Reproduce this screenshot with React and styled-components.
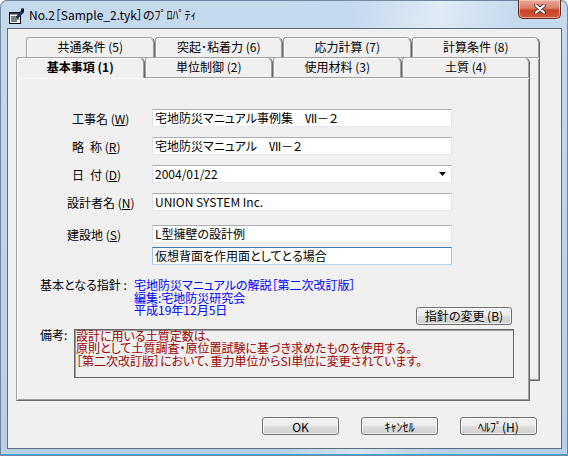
import React from 'react';
import styled, { createGlobalStyle } from 'styled-components';

const FONT = `"Noto Sans CJK JP", "Noto Sans", sans-serif`;

const Global = createGlobalStyle`
  html, body { margin: 0; padding: 0; background: #ffffff; }
  body {
    font-family: ${FONT};
    font-size: 12px;
    color: #000;
    font-feature-settings: "palt";
  }
  * { box-sizing: border-box; }
`;

const Window = styled.div`
  width: 568px;
  height: 456px;
  display: flex;
  flex-direction: column;
  padding: 0 5px 6px 6px;
  border: 1px solid rgba(50, 70, 100, 0.55);
  border-radius: 7px 7px 0 0;
  background:
    linear-gradient(100deg, rgba(255,255,255,0) 55%, rgba(255,255,255,0.45) 68%, rgba(255,255,255,0) 80%),
    linear-gradient(180deg, #c6daee 0%, #bcd2ea 60%, #b7cfe8 100%);
  box-shadow: inset 0 -1px 0 #39a7d6;
`;

const TitleBar = styled.div`
  height: 27px;
  display: flex;
  align-items: flex-start;
  flex-shrink: 0;
`;

const TitleIcon = styled.svg`
  width: 17px;
  height: 16px;
  margin: 7px 0 0 1px;
  flex-shrink: 0;
`;

const TitleText = styled.div`
  margin: 6px 0 0 4px;
  font-size: 12px;
  line-height: 16px;
  color: #000;
  white-space: nowrap;
`;

const CloseButton = styled.div`
  margin-left: auto;
  margin-top: -1px;
  margin-right: 1px;
  width: 43px;
  height: 19px;
  border: 1px solid #6b2a20;
  border-top: none;
  border-radius: 0 0 5px 5px;
  background: linear-gradient(180deg, #e9a99a 0%, #dd806c 45%, #c9452b 55%, #d0583c 100%);
  box-shadow: inset 0 0 0 1px rgba(255, 220, 210, 0.55);
  display: flex;
  align-items: center;
  justify-content: center;
`;

const Client = styled.div`
  flex: 1;
  display: flex;
  flex-direction: column;
  border: 1px solid #5b6c80;
  background: #f0f0f0;
`;

const Stack = styled.div`
  display: grid;
  width: 524px;
  height: 364px;
  margin: 8px 0 0 8px;
`;

const Sheet = styled.div`
  grid-area: 1 / 1;
  width: 514px;
  height: 344px;
  display: flex;
  flex-direction: column;
  justify-self: ${p => (p.$back ? 'end' : 'start')};
  align-self: ${p => (p.$back ? 'start' : 'end')};
`;

const TabRow = styled.div`
  display: flex;
  height: 20px;
  align-items: flex-end;
  flex-shrink: 0;
`;

const Tab = styled.div`
  flex: 1;
  height: ${p => (p.$active ? '21px' : '20px')};
  margin-bottom: ${p => (p.$active ? '-1px' : '0')};
  position: relative;
  z-index: ${p => (p.$active ? 2 : 1)};
  display: flex;
  align-items: center;
  justify-content: center;
  padding-bottom: ${p => (p.$active ? '3px' : '2px')};
  background: #f0f0f0;
  border: 1px solid;
  border-bottom: none;
  border-color: #a0a0a0 #696969 transparent #a0a0a0;
  border-radius: 3px 6px 0 0;
  box-shadow: inset 1px 1px 0 #ffffff, inset -1px 0 0 #a0a0a0;
  font-size: 12px;
  font-weight: ${p => (p.$active ? 700 : 400)};
  white-space: nowrap;
`;

const Panel = styled.div`
  flex: 1;
  background: #f0f0f0;
  border: 1px solid;
  border-color: #a0a0a0 #696969 #696969 #a0a0a0;
  box-shadow: inset 1px 1px 0 #ffffff, inset -1px -1px 0 #a0a0a0;
  display: flex;
  flex-direction: column;
`;

const FieldList = styled.div`
  display: flex;
  flex-direction: column;
  padding-top: 31px;
`;

const FieldRow = styled.div`
  display: flex;
  align-items: center;
  margin-top: ${p => p.$gap || 0}px;
`;

const Label = styled.div`
  width: 135px;
  padding-left: ${p => p.$indent}px;
  font-size: 12px;
  white-space: nowrap;
`;

const TextBox = styled.div`
  width: 300px;
  height: 18px;
  background: #ffffff;
  border: 1px solid;
  border-color: ${p =>
    p.$focus ? '#3d7bad #a4c3e3 #b7d3ee #a4c3e3' : '#abadb3 #e2e3ea #e3e9ef #dbdfe6'};
  padding: 0 0 0 2px;
  font-size: 12px;
  line-height: 16px;
  white-space: nowrap;
  overflow: hidden;
  display: flex;
  align-items: center;
  justify-content: space-between;
`;

const Arrow = styled.svg`
  width: 7px;
  height: 4px;
  margin-right: 5px;
`;

const Lower = styled.div`
  display: flex;
  flex-direction: column;
  padding-left: 23px;
  margin-top: 14px;
  width: 497px;
`;

const GuideRow = styled.div`
  display: flex;
  align-items: flex-start;
`;

const SideLabel = styled.div`
  width: ${p => p.$w}px;
  flex-shrink: 0;
  font-size: 12px;
  line-height: 12.5px;
  white-space: nowrap;
`;

const GuideText = styled.div`
  flex: 1;
  color: #0000ff;
  font-size: 12px;
  line-height: 12.5px;
  white-space: nowrap;
`;

const PushButton = styled.div`
  width: ${p => p.$w}px;
  height: 18px;
  flex-shrink: 0;
  border: 1px solid #707070;
  border-radius: 3px;
  background: linear-gradient(180deg, #f2f2f2 0%, #ebebeb 48%, #dddddd 52%, #cfcfcf 100%);
  box-shadow: inset 0 0 0 1px rgba(255, 255, 255, 0.7);
  display: flex;
  align-items: center;
  justify-content: center;
  font-size: 12px;
  white-space: nowrap;
`;

const GuideButton = styled(PushButton)`
  align-self: flex-end;
  margin-bottom: -8px;
  margin-right: 2px;
`;

const NoteRow = styled.div`
  display: flex;
  align-items: flex-start;
  margin-top: 12px;
`;

const NoteBox = styled.div`
  width: 440px;
  height: 49px;
  border: 1px solid #666666;
  box-shadow: inset 1px 1px 0 #9c9c9c;
  color: #a00000;
  font-size: 12px;
  line-height: 12.5px;
  padding: 0 0 0 1px;
  white-space: nowrap;
`;

const Footer = styled.div`
  display: flex;
  justify-content: flex-end;
  gap: 22px;
  margin-top: 16px;
  padding-right: 24px;
`;

const backTabs = ['共通条件 (5)', '突起･粘着力 (6)', '応力計算 (7)', '計算条件 (8)'];
const frontTabs = ['基本事項 (1)', '単位制御 (2)', '使用材料 (3)', '土質 (4)'];

const fields = [
  { label: '工事名', key: 'W', indent: 55, value: '宅地防災マニュアル事例集　Ⅶ－２', gap: 0 },
  { label: '略\u2002称', key: 'R', indent: 55, value: '宅地防災マニュアル　Ⅶ－２', gap: 10 },
  { label: '日\u2002付', key: 'D', indent: 55, value: '2004/01/22', gap: 10, combo: true },
  { label: '設計者名', key: 'N', indent: 50, value: 'UNION SYSTEM Inc.', gap: 10 },
  { label: '建設地', key: 'S', indent: 50, value: 'L型擁壁の設計例', gap: 14 },
];

export default function App() {
  return (
    <>
      <Global />
      <Window>
        <TitleBar>
          <TitleIcon viewBox="0 0 17 16">
            <rect x="1.5" y="4.5" width="11" height="11" fill="#fff" stroke="#000" />
            <rect x="1.5" y="4.5" width="11" height="2" fill="#333" />
            <line x1="3" y1="9" x2="11" y2="9" stroke="#000" />
            <line x1="3" y1="11" x2="11" y2="11" stroke="#000" />
            <line x1="3" y1="13" x2="9" y2="13" stroke="#000" />
            <path d="M8 9 L14 2 L16 4 L10 10 Z" fill="#1f3c8c" stroke="#000" strokeWidth="0.6" />
            <rect x="13" y="0.5" width="3" height="3" fill="#000" />
          </TitleIcon>
          <TitleText>No.2［Sample_2.tyk］のﾌﾟﾛﾊﾟﾃｨ</TitleText>
          <CloseButton>
            <svg width="12" height="10" viewBox="0 0 12 10">
              <path d="M2 1.5 L10 8.5 M10 1.5 L2 8.5" stroke="#5a2a22" strokeWidth="4" strokeLinecap="round" />
              <path d="M2 1.5 L10 8.5 M10 1.5 L2 8.5" stroke="#ffffff" strokeWidth="2.2" strokeLinecap="round" />
            </svg>
          </CloseButton>
        </TitleBar>
        <Client>
          <Stack>
            <Sheet $back>
              <TabRow>
                {backTabs.map(t => (
                  <Tab key={t}>{t}</Tab>
                ))}
              </TabRow>
              <Panel />
            </Sheet>
            <Sheet>
              <TabRow>
                {frontTabs.map((t, i) => (
                  <Tab key={t} $active={i === 0}>{t}</Tab>
                ))}
              </TabRow>
              <Panel>
                <FieldList>
                  {fields.map(f => (
                    <FieldRow key={f.key} $gap={f.gap}>
                      <Label $indent={f.indent}>
                        {f.label} (<u>{f.key}</u>)
                      </Label>
                      <TextBox>
                        <span>{f.value}</span>
                        {f.combo && (
                          <Arrow viewBox="0 0 7 4">
                            <path d="M0 0 H7 L3.5 4 Z" fill="#000" />
                          </Arrow>
                        )}
                      </TextBox>
                    </FieldRow>
                  ))}
                  <FieldRow $gap={4}>
                    <Label $indent={50} />
                    <TextBox $focus>
                      <span>仮想背面を作用面としてとる場合</span>
                    </TextBox>
                  </FieldRow>
                </FieldList>
                <Lower>
                  <GuideRow>
                    <SideLabel $w={94}>基本となる指針 :</SideLabel>
                    <GuideText>
                      宅地防災マニュアルの解説［第二次改訂版］
                      <br />
                      編集:宅地防災研究会
                      <br />
                      平成19年12月5日
                    </GuideText>
                    <GuideButton $w={96}>指針の変更 (B)</GuideButton>
                  </GuideRow>
                  <NoteRow>
                    <SideLabel $w={34}>備考:</SideLabel>
                    <NoteBox>
                      設計に用いる土質定数は、
                      <br />
                      原則として土質調査・原位置試験に基づき求めたものを使用する。
                      <br />
                      ［第二次改訂版］において、重力単位からSI単位に変更されています。
                    </NoteBox>
                  </NoteRow>
                </Lower>
              </Panel>
            </Sheet>
          </Stack>
          <Footer>
            <PushButton $w={77}>OK</PushButton>
            <PushButton $w={77}>ｷｬﾝｾﾙ</PushButton>
            <PushButton $w={77}>ﾍﾙﾌﾟ(H)</PushButton>
          </Footer>
        </Client>
      </Window>
    </>
  );
}
